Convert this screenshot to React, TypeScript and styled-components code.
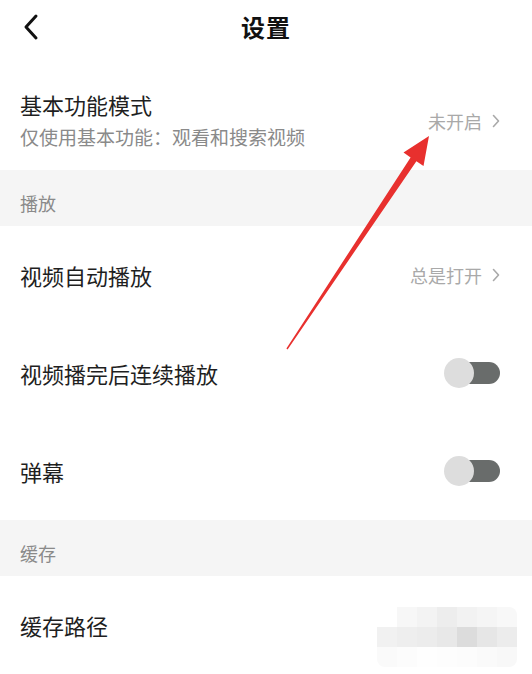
import React from 'react';
import styled, { createGlobalStyle } from 'styled-components';

const GlobalStyle = createGlobalStyle`
  html, body {
    margin: 0;
    padding: 0;
    background: #ffffff;
  }
  body {
    font-family: "Noto Sans CJK SC", "Noto Sans", sans-serif;
    color: #1f1f1f;
  }
`;

const Page = styled.div`
  position: relative;
  width: 532px;
  height: 674px;
  overflow: hidden;
  background: #ffffff;
`;

const Header = styled.header`
  position: relative;
  height: 56px;
  display: flex;
  align-items: center;
  justify-content: center;
  padding-bottom: 4px;
  box-sizing: border-box;
`;

const BackButton = styled.button`
  position: absolute;
  left: 16px;
  top: 11px;
  width: 30px;
  height: 32px;
  padding: 0;
  border: none;
  background: transparent;
  display: flex;
  align-items: center;
  justify-content: center;
`;

const Title = styled.h1`
  margin: 0;
  font-size: 24px;
  font-weight: 700;
  color: #111;
  letter-spacing: 1px;
`;

const Row = styled.div<{ $height: number }>`
  height: ${(p) => p.$height}px;
  display: flex;
  align-items: center;
  justify-content: space-between;
  padding: 0 32px 0 20px;
  box-sizing: border-box;
`;

const TextBlock = styled.div`
  display: flex;
  flex-direction: column;
  gap: 8px;
  padding-top: 14px;
`;

const Label = styled.div`
  font-size: 22px;
  line-height: 26px;
  color: #1f1f1f;
`;

const SubLabel = styled.div`
  font-size: 19px;
  line-height: 24px;
  color: #8a8a8a;
`;

const Value = styled.div<{ $offset?: number }>`
  display: flex;
  align-items: center;
  gap: 10px;
  font-size: 18px;
  color: #a9a9a9;
  margin-top: ${(p) => p.$offset ?? 0}px;
`;

const Section = styled.div`
  height: 56px;
  background: #f5f5f5;
  display: flex;
  align-items: center;
  padding: 9px 20px 0;
  box-sizing: border-box;
  font-size: 18px;
  color: #8a8a8a;
`;

const Toggle = styled.div`
  position: relative;
  width: 56px;
  height: 32px;
`;

const Track = styled.div`
  position: absolute;
  right: 0;
  top: 5px;
  width: 46px;
  height: 22px;
  border-radius: 11px;
  background: #696c6b;
`;

const Knob = styled.div`
  position: absolute;
  left: 0;
  top: 1px;
  width: 30px;
  height: 30px;
  border-radius: 50%;
  background: #dddddd;
`;

const Mosaic = styled.div`
  display: grid;
  grid-template-columns: repeat(7, 20px);
  grid-auto-rows: 20px;
  margin-right: -17px;
  margin-top: 24px;
  border-radius: 8px;
  overflow: hidden;
`;

const Cell = styled.div<{ $c: string }>`
  background: ${(p) => p.$c};
`;

const ArrowLayer = styled.svg`
  position: absolute;
  left: 0;
  top: 0;
  pointer-events: none;
`;

const Chevron = () => (
  <svg width="8" height="14" viewBox="0 0 8 14">
    <polyline points="1.5,1.5 6.5,7 1.5,12.5" fill="none" stroke="#a9a9a9" strokeWidth="1.6" strokeLinecap="round" strokeLinejoin="round" />
  </svg>
);

const Switch = () => (
  <Toggle>
    <Track />
    <Knob />
  </Toggle>
);

const mosaic = [
  '#ffffff', '#f7f7f7', '#f3f3f3', '#ededed', '#f2f2f2', '#f5f5f5', '#f8f8f8',
  '#f1f1f1', '#eeeeee', '#ececec', '#e8e8e8', '#dcdcdc', '#e6e6e6', '#ececec',
  '#fafafa', '#fcfcfc', '#fefefe', '#fdfdfd', '#fcfcfc', '#fafafa', '#f8f8f8',
];

export default function App() {
  return (
    <>
      <GlobalStyle />
      <Page>
        <Header>
          <BackButton aria-label="back">
            <svg width="18" height="28" viewBox="0 0 18 28">
              <polyline points="14,3 4,14 14,25" fill="none" stroke="#111" strokeWidth="3" strokeLinecap="round" strokeLinejoin="round" />
            </svg>
          </BackButton>
          <Title>设置</Title>
        </Header>

        <Row $height={114}>
          <TextBlock>
            <Label>基本功能模式</Label>
            <SubLabel>仅使用基本功能：观看和搜索视频</SubLabel>
          </TextBlock>
          <Value $offset={16}>
            未开启 <Chevron />
          </Value>
        </Row>

        <Section>播放</Section>

        <Row $height={98}>
          <Label>视频自动播放</Label>
          <Value>
            总是打开 <Chevron />
          </Value>
        </Row>
        <Row $height={98}>
          <Label>视频播完后连续播放</Label>
          <Switch />
        </Row>
        <Row $height={98}>
          <Label>弹幕</Label>
          <Switch />
        </Row>

        <Section>缓存</Section>

        <Row $height={98}>
          <Label>缓存路径</Label>
          <Mosaic>
            {mosaic.map((c, i) => (
              <Cell key={i} $c={c} />
            ))}
          </Mosaic>
        </Row>

        <ArrowLayer width="532" height="674" viewBox="0 0 532 674">
          <polygon
            points="286.4,348.6 410.6,157.4 403.5,152.6 429,136 423.5,166 416.4,161.2 287.6,349.4"
            fill="#e8302e"
          />
        </ArrowLayer>
      </Page>
    </>
  );
}
